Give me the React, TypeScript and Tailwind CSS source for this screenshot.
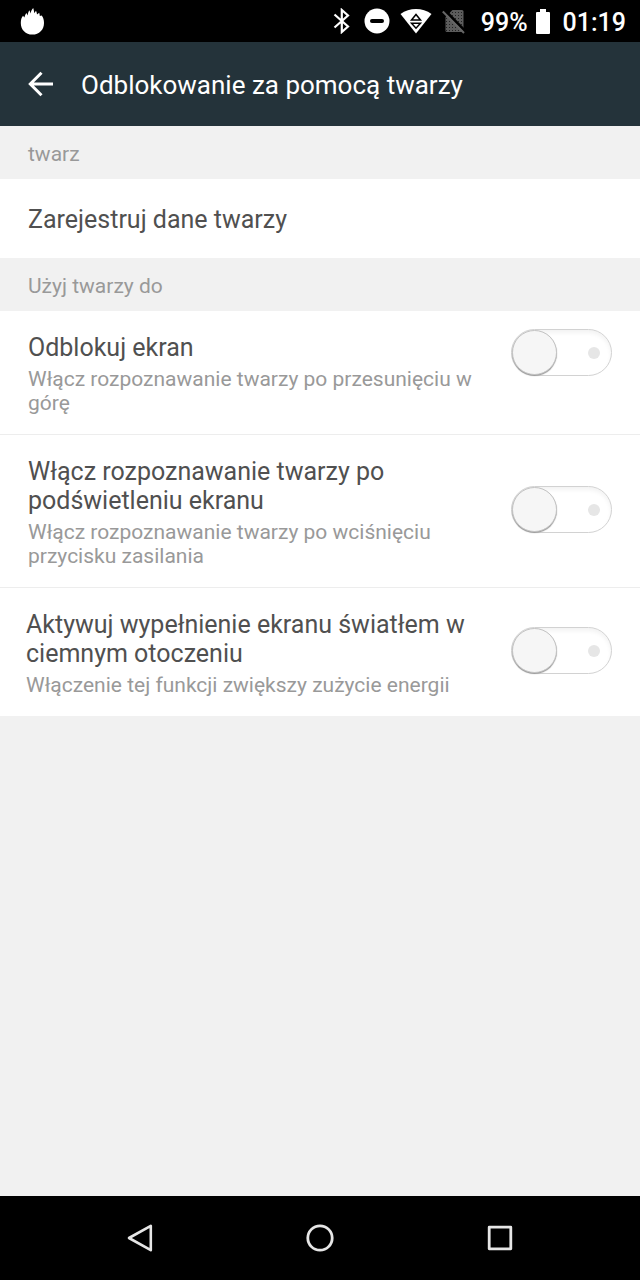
import { useState } from "react";

const settings = [
    {
        id: "unlock",
        title: "Odblokuj ekran",
        text: "Włącz rozpoznawanie twarzy po przesunięciu w górę",
        row: "items-start px-7",
        toggle: "mt-[18px]",
    },
    {
        id: "wake",
        title: "Włącz rozpoznawanie twarzy po podświetleniu ekranu",
        text: "Włącz rozpoznawanie twarzy po wciśnięciu przycisku zasilania",
        row: "items-center px-7",
        toggle: "mb-[3px]",
    },
    {
        id: "light",
        title: "Aktywuj wypełnienie ekranu światłem w ciemnym otoczeniu",
        text: "Włączenie tej funkcji zwiększy zużycie energii",
        row: "items-center pl-[26px] pr-7",
        toggle: "mb-[3px]",
    },
];

function StatusBar() {
    return <div className="flex h-[42px] items-center bg-black text-white">
        <svg className="ml-5 shrink-0" width="26" height="28" viewBox="0 0 26 28" fill="white">
            <path d="M12.400 27.600C5.600 27.600.8 22.800.8 16c0-3.400.7-5.400 2.200-7.300l1.400 1.800c.5-1.900 1-3.200 2-4.500L7.800 8.500c0-2.200.5-3.700 1.600-5.300l1.300 3.200c.2-2.200 1-4 2.500-5.400.6 2 1 3.300 1 5.300l1.800-2.600c.6 1.300.9 2.400 1 3.700l2.200-1.600c.4 1.200.6 2.200.6 3.300l1.900-.7c1.500 2 2.300 4.300 2.300 7.600 0 6.800-4.800 11.600-11.600 11.600Z" />
        </svg>
        <div className="ml-auto flex h-full items-center pr-[14px]">
            <svg width="18" height="26" viewBox="0 0 18 26" fill="none" stroke="white" strokeWidth="2.2">
                <path d="m1.500 6.500 13.500 12-6.200 5.500V2l6.200 5.500-13.500 12" />
            </svg>
            <svg className="ml-[13px]" width="26" height="26" viewBox="0 0 26 26">
                <circle cx="13" cy="13" r="12.500" fill="white" />
                <rect x="6" y="11" width="14" height="4" rx="2" fill="black" />
            </svg>
            <svg className="ml-[10px]" width="32" height="26" viewBox="0 0 32 26">
                <path d="M.5 6C9.500-.8 22.500-.8 31.500 6L16 25.500Z" fill="white" />
                <path d="M11.500 12 16 6.500l4.500 5.500ZM11.500 15.200h9l-4.500 5Z" fill="none" stroke="black" strokeWidth="1.500" />
            </svg>
            <svg className="ml-[10px]" width="24" height="26" viewBox="0 0 24 26">
                <defs>
                    <pattern id="dots" width="3" height="3" patternUnits="userSpaceOnUse">
                        <rect width="3" height="3" fill="#5c5c5c" />
                        <rect x="1" y="1" width="1" height="1" fill="#222" />
                    </pattern>
                </defs>
                <path d="M10.500 2H20a1.500 1.500 0 0 1 1.500 1.500V24H5a1.500 1.500 0 0 1-1.500-1.500V9Z" fill="url(#dots)" />
                <path d="M3 2.500l20 20.500" stroke="black" strokeWidth="3" />
                <path d="M.8 3.500 22 25" stroke="#666" strokeWidth="2" />
            </svg>
            <span className="mt-[3px] ml-[15px] text-[25px] leading-7 font-medium">99%</span>
            <svg className="ml-[8px]" width="14" height="26" viewBox="0 0 14 26" fill="white">
                <path d="M4 1h6v3h3q1 0 1 1v20q0 1-1 1H1q-1 0-1-1V5q0-1 1-1h3Z" />
            </svg>
            <span className="mt-[3px] ml-[13px] text-[25px] leading-7 font-medium">01:19</span>
        </div>
    </div>
}

function Switch({ id, className }: { id: string; className: string }) {
    const [on, setOn] = useState(false);
    return <input
        type="checkbox"
        role="switch"
        id={id}
        checked={on}
        onChange={() => setOn(!on)}
        className={`${className} flex h-[47px] w-[101px] shrink-0 cursor-pointer appearance-none items-center justify-between rounded-full border border-[#d2d2d2] bg-white shadow-[inset_0_3px_4px_#f3f3f3] before:-mt-px before:size-[45px] before:rounded-full before:border before:border-[#c4c4c4] before:bg-[#f6f6f6] before:shadow-[0_1px_1px_#9a9a9a] after:mr-[11px] after:size-3 after:rounded-full after:bg-[#e6e6e6] checked:flex-row-reverse checked:bg-[#80cbc4] checked:after:ml-[11px]`}
    />
}

function App() {
    return <div className="flex min-h-screen flex-col bg-[#f1f1f1] font-[Roboto,sans-serif] text-[#505050]">
        <StatusBar />
        <header className="flex h-[84px] items-center bg-[#24333a] pl-7 text-white">
            <button type="button" aria-label="Wstecz">
                <svg width="26" height="26" viewBox="0 0 26 26" fill="none" stroke="white" strokeWidth="3">
                    <path d="M25 13H3M13.500 1.800 2.300 13l11.200 11.200" />
                </svg>
            </button>
            <h1 className="ml-[27px] pt-[2px] text-[26px] leading-8">Odblokowanie za pomocą twarzy</h1>
        </header>
        <main className="flex-1">
            <h2 className="px-7 pt-4 pb-[13px] text-[21px] leading-6 text-[#999]">twarz</h2>
            <button type="button" className="block w-full bg-white px-7 pt-[26px] pb-6 text-left text-[25px] leading-[29px]">Zarejestruj dane twarzy</button>
            <h2 className="px-7 pt-4 pb-[13px] text-[21px] leading-6 text-[#999]">Użyj twarzy do</h2>
            <div className="divide-y divide-[#ededed] bg-white">
                {settings.map((item) => (
                    <div key={item.id} className={`flex justify-between gap-8 ${item.row}`}>
                        <label htmlFor={item.id} className="flex-1 pt-[22px] pb-[19px]">
                            <span className="block text-[25px] leading-[29px]">{item.title}</span>
                            <span className="mt-[5px] block text-[21px] leading-6 text-[#999]">{item.text}</span>
                        </label>
                        <Switch id={item.id} className={item.toggle} />
                    </div>
                ))}
            </div>
        </main>
        <nav className="flex h-[84px] items-center justify-center gap-[152px] bg-black">
            <button type="button" aria-label="Wróć">
                <svg width="28" height="28" viewBox="0 0 28 28" fill="none" stroke="#e6e6e6" strokeWidth="2.600" strokeLinejoin="round">
                    <path d="M24.800 1.800v24.400L3 14Z" />
                </svg>
            </button>
            <button type="button" aria-label="Ekran główny">
                <svg width="28" height="28" viewBox="0 0 28 28" fill="none" stroke="#e6e6e6" strokeWidth="2.800">
                    <circle cx="14" cy="14" r="12.200" />
                </svg>
            </button>
            <button type="button" aria-label="Ostatnie aplikacje">
                <svg width="28" height="28" viewBox="0 0 28 28" fill="none" stroke="#e6e6e6" strokeWidth="2.800" strokeLinejoin="round">
                    <rect x="3.200" y="3.200" width="21.600" height="21.600" />
                </svg>
            </button>
        </nav>
    </div>
}

export default App;
